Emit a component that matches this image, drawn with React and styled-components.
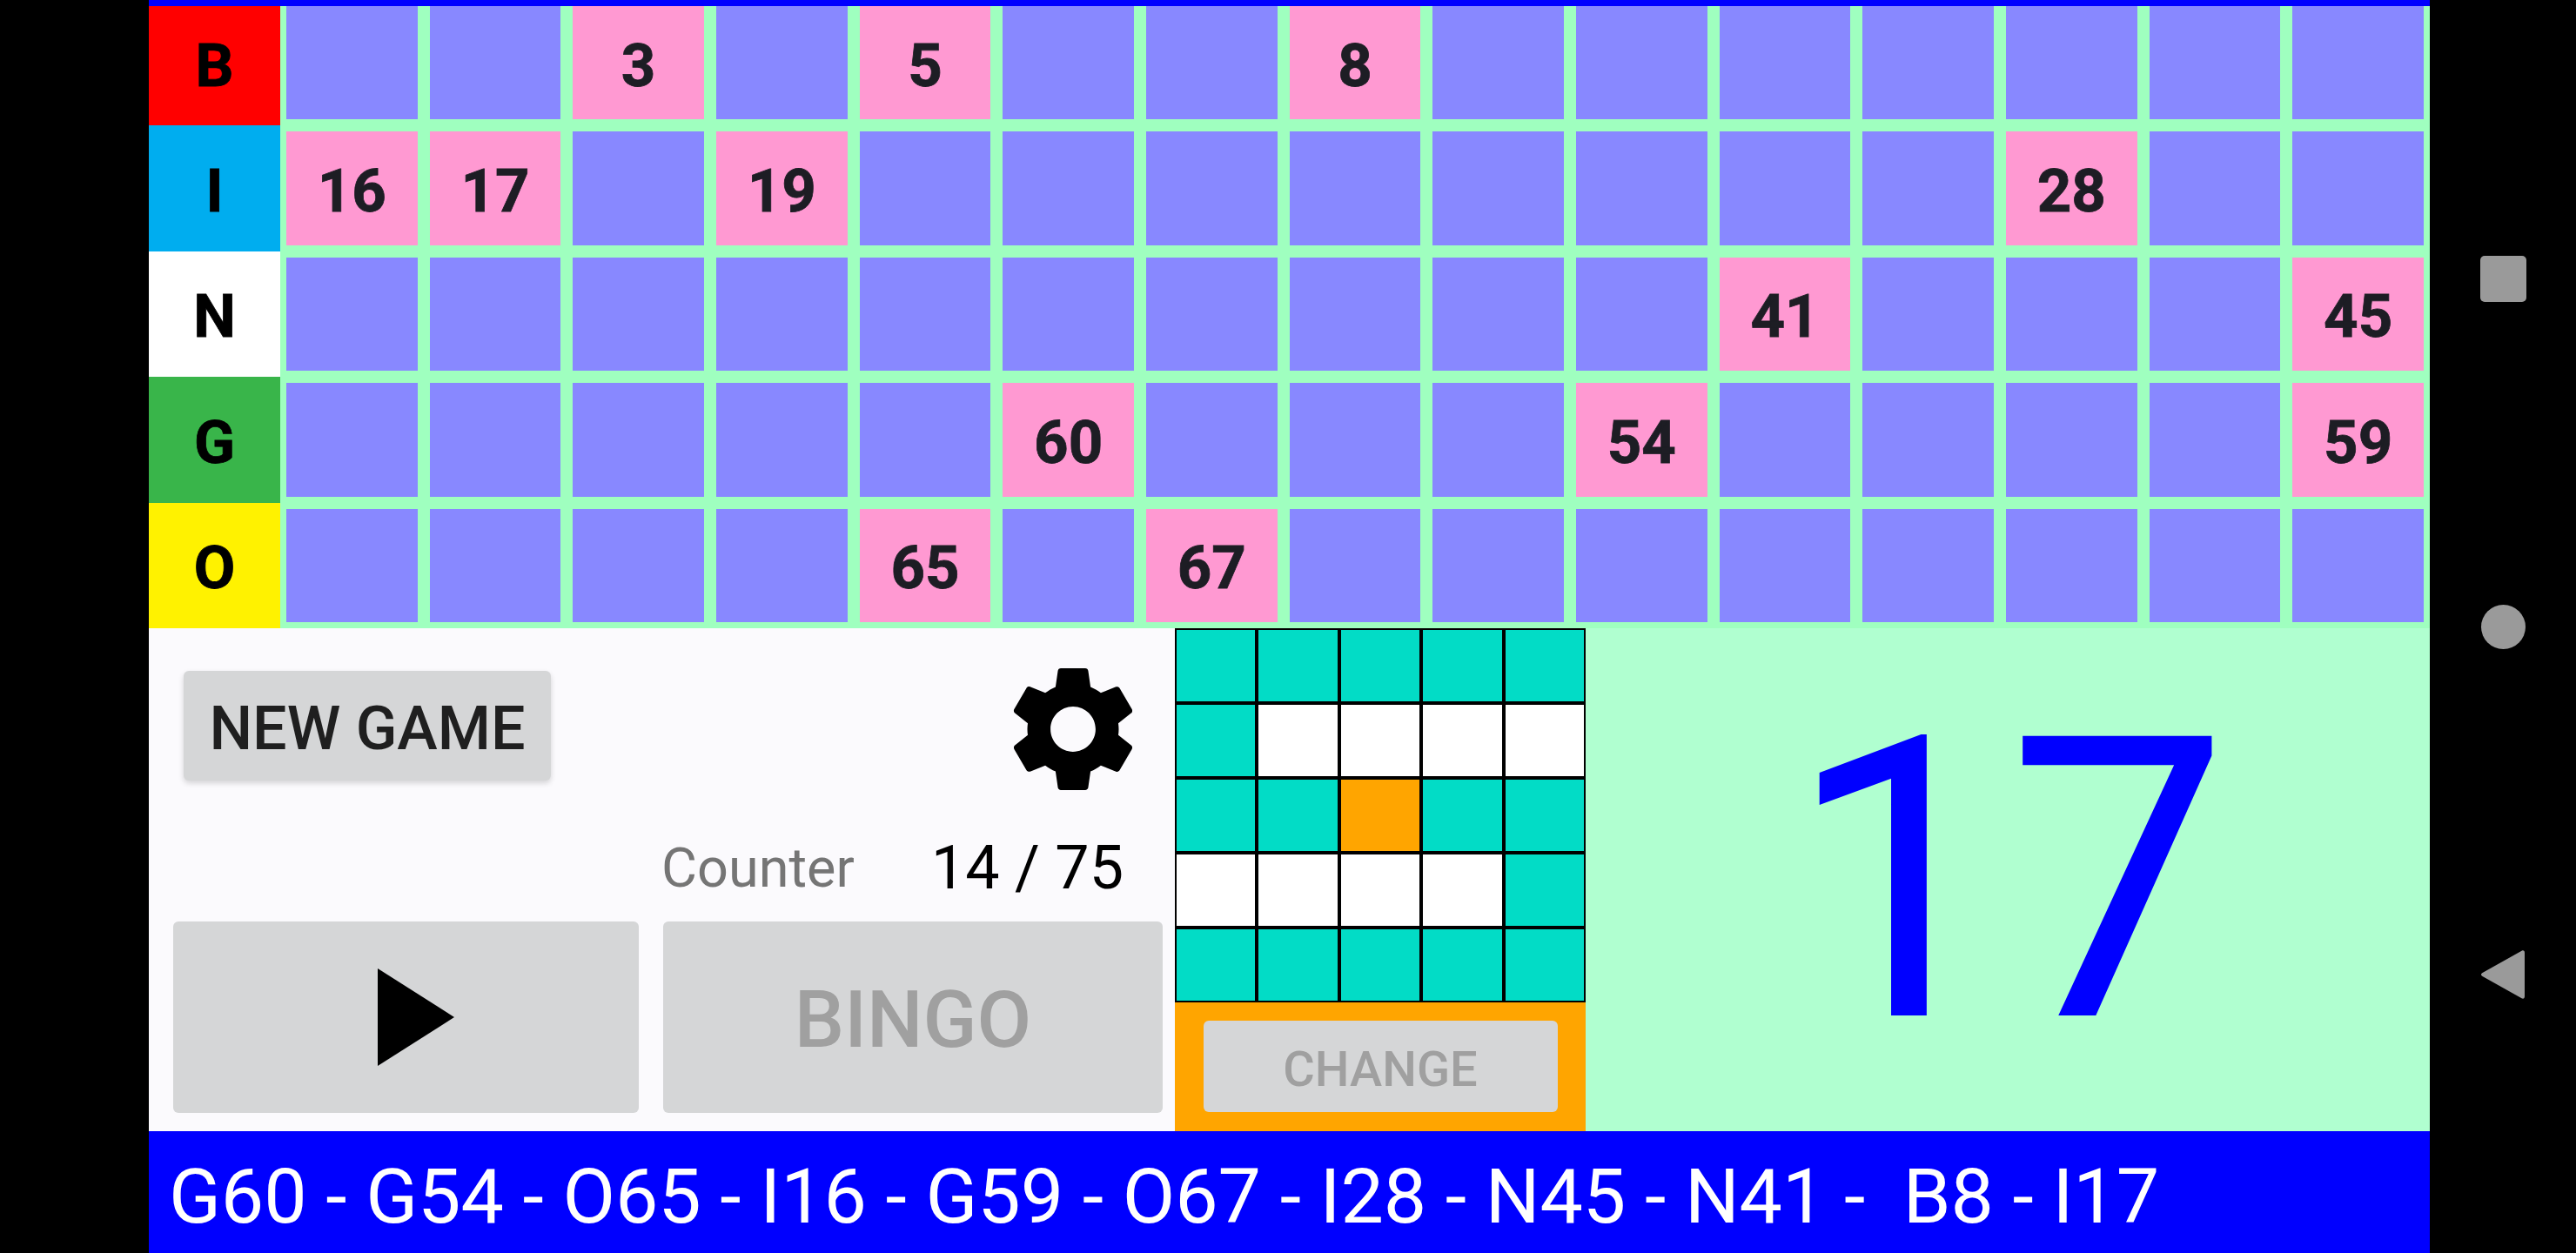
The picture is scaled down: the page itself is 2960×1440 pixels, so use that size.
import React from 'react';
import styled, { createGlobalStyle } from 'styled-components';

const GlobalStyle = createGlobalStyle`
  html, body { margin: 0; padding: 0; background: #000; }
  body { font-family: Roboto, "Liberation Sans", sans-serif; }
`;

const ROWS = [
  { letter: 'B', color: '#ff0000', called: { 3: 3, 5: 5, 8: 8 } },
  { letter: 'I', color: '#00adef', called: { 1: 16, 2: 17, 4: 19, 13: 28 } },
  { letter: 'N', color: '#ffffff', called: { 11: 41, 15: 45 } },
  { letter: 'G', color: '#39b54a', called: { 6: 60, 10: 54, 15: 59 } },
  { letter: 'O', color: '#fff200', called: { 5: 65, 7: 67 } }
];

const PATTERN = ['00000', '01111', '00200', '11110', '00000'];

const COLS = Array.from({ length: 15 }, (_, i) => i + 1);

const Screen = styled.div`
  display: flex;
  width: 2960px;
  height: 1440px;
  padding-left: 171px;
  box-sizing: border-box;
  background: #000;
  overflow: hidden;
`;

const Game = styled.div`
  display: flex;
  flex-direction: column;
  width: 2621px;
  height: 1440px;
`;

const TopBar = styled.div`
  height: 7px;
  background: #0000ff;
`;

const Board = styled.div`
  display: grid;
  grid-template-columns: 151px repeat(15, 1fr);
  grid-template-rows: 137.4px repeat(4, 144.4px);
  background: #9fffbf;
`;

const RowLabel = styled.div`
  display: flex;
  align-items: center;
  justify-content: center;
  box-sizing: border-box;
  padding: ${p => (p.$first ? '0 0 1px' : '6px 0 0')};
  background: ${p => p.$color};
  color: #000;
  font: 700 69px Roboto, sans-serif;
  -webkit-text-stroke: 0.8px #000;
`;

const Tile = styled.div`
  display: flex;
  align-items: center;
  justify-content: center;
  margin: ${p => (p.$first ? '0 7px 7px' : '7px')};
  padding-top: 6px;
  background: ${p => (p.$called ? '#ff99d2' : '#8888ff')};
  color: #1d1d24;
  font: 700 69px Roboto, sans-serif;
  -webkit-text-stroke: 0.8px #1d1d24;
`;

const Controls = styled.div`
  display: flex;
  height: 578px;
`;

const LeftPanel = styled.div`
  display: flex;
  flex-direction: column;
  width: 1179px;
  background: #fbfafd;
`;

const TopRow = styled.div`
  display: flex;
  align-items: center;
  justify-content: space-between;
  height: 126px;
  margin-top: 49px;
  padding: 0 33px 0 40px;
`;

const Button = styled.div`
  display: flex;
  align-items: center;
  justify-content: center;
  box-sizing: border-box;
  border-radius: 6px;
  background: #d5d6d7;
  font-family: Roboto, sans-serif;
  font-weight: 500;
`;

const NewGame = styled(Button)`
  width: 422px;
  height: 126px;
  padding-top: 6px;
  color: #1f1f1f;
  font-size: 70px;
  box-shadow: 0 3px 6px rgba(0, 0, 0, 0.16);
`;

const Gear = styled.svg`
  display: block;
  width: 168px;
  height: 168px;
  margin-top: 9px;
  fill: #000;
`;

const CounterRow = styled.div`
  display: flex;
  align-items: center;
  height: 60px;
  margin-top: 70px;
  padding-left: 589px;
`;

const CounterLabel = styled.span`
  width: 310px;
  padding-top: 2px;
  color: #757575;
  font-size: 63px;
`;

const CounterValue = styled.span`
  color: #000;
  font-size: 70px;
`;

const ButtonRow = styled.div`
  display: flex;
  gap: 28px;
  margin-top: auto;
  margin-bottom: 21px;
  padding-left: 28px;
`;

const PlayButton = styled(Button)`
  width: 535px;
  height: 220px;
`;

const PlayIcon = styled.svg`
  display: block;
  width: 88px;
  height: 112px;
  margin-left: 23px;
  fill: #000;
`;

const BingoButton = styled(Button)`
  width: 574px;
  height: 220px;
  padding-top: 7px;
  color: #a0a0a0;
  font-size: 91px;
`;

const PatternColumn = styled.div`
  display: flex;
  flex-direction: column;
  width: 472px;
  background: #ffa500;
`;

const PatternGrid = styled.div`
  display: grid;
  grid-template-columns: repeat(5, 1fr);
  grid-template-rows: repeat(5, 1fr);
  height: 430px;
`;

const PatternCell = styled.div`
  box-sizing: border-box;
  border: 2px solid #000;
  background: ${p => ({ 0: '#02dcc6', 1: '#ffffff', 2: '#ffa500' })[p.$kind]};
`;

const ChangeWrap = styled.div`
  display: flex;
  flex: 1;
  align-items: center;
  justify-content: center;
`;

const ChangeButton = styled(Button)`
  width: 407px;
  height: 105px;
  padding-top: 6px;
  color: #a0a0a0;
  font-size: 56px;
`;

const NumberPanel = styled.div`
  display: flex;
  flex: 1;
  align-items: center;
  justify-content: center;
  padding-top: 4px;
  background: #b0ffd0;
  color: #0000ff;
  font-size: 452px;
  line-height: 1;
`;

const CallLog = styled.div`
  display: flex;
  flex: 1;
  align-items: center;
  padding: 9px 0 0 23px;
  background: #0000ff;
  color: #fff;
  font-size: 88px;
  letter-spacing: -0.1px;
  white-space: pre;
`;

const NavBar = styled.div`
  display: grid;
  grid-template-rows: repeat(3, 400px);
  justify-items: center;
  align-items: center;
  width: 168px;
  padding-top: 120px;
`;

const NavSquare = styled.div`
  width: 53px;
  height: 53px;
  border-radius: 5px;
  background: #9a9a9a;
`;

const NavCircle = styled.div`
  width: 51px;
  height: 51px;
  border-radius: 50%;
  background: #9a9a9a;
`;

const NavBack = styled.svg`
  display: block;
  width: 50px;
  height: 56px;
  fill: #9a9a9a;
`;

const App = () => (
  <Screen>
    <GlobalStyle />
    <Game>
      <TopBar />
      <Board>
        {ROWS.map((row, r) => (
          <React.Fragment key={row.letter}>
            <RowLabel $first={r === 0} $color={row.color}>{row.letter}</RowLabel>
            {COLS.map(col => (
              <Tile key={col} $first={r === 0} $called={!!row.called[col]}>
                {row.called[col]}
              </Tile>
            ))}
          </React.Fragment>
        ))}
      </Board>
      <Controls>
        <LeftPanel>
          <TopRow>
            <NewGame>NEW GAME</NewGame>
            <Gear viewBox="0 0 24 24">
              <path d="M19.43 12.98c.04-.32.07-.64.07-.98s-.03-.66-.07-.98l2.11-1.65c.19-.15.24-.42.12-.64l-2-3.46c-.12-.22-.39-.3-.61-.22l-2.49 1c-.52-.4-1.08-.73-1.69-.98l-.38-2.65C14.46 2.18 14.25 2 14 2h-4c-.25 0-.46.18-.49.42l-.38 2.65c-.61.25-1.17.59-1.69.98l-2.49-1c-.23-.09-.49 0-.61.22l-2 3.46c-.13.22-.07.49.12.64l2.11 1.65c-.04.32-.07.65-.07.98s.03.66.07.98l-2.11 1.65c-.19.15-.24.42-.12.64l2 3.46c.12.22.39.3.61.22l2.49-1c.52.4 1.08.73 1.69.98l.38 2.65c.03.24.24.42.49.42h4c.25 0 .46-.18.49-.42l.38-2.65c.61-.25 1.17-.59 1.69-.98l2.49 1c.23.09.49 0 .61-.22l2-3.46c.12-.22.07-.49-.12-.64l-2.11-1.65zM12 15.7c-2.04 0-3.7-1.66-3.7-3.7s1.66-3.7 3.7-3.7 3.7 1.66 3.7 3.7-1.66 3.7-3.7 3.7z" />
            </Gear>
          </TopRow>
          <CounterRow>
            <CounterLabel>Counter</CounterLabel>
            <CounterValue>14 / 75</CounterValue>
          </CounterRow>
          <ButtonRow>
            <PlayButton>
              <PlayIcon viewBox="0 0 88 112">
                <polygon points="0,0 88,56 0,112" />
              </PlayIcon>
            </PlayButton>
            <BingoButton>BINGO</BingoButton>
          </ButtonRow>
        </LeftPanel>
        <PatternColumn>
          <PatternGrid>
            {PATTERN.join('').split('').map((kind, i) => (
              <PatternCell key={i} $kind={kind} />
            ))}
          </PatternGrid>
          <ChangeWrap>
            <ChangeButton>CHANGE</ChangeButton>
          </ChangeWrap>
        </PatternColumn>
        <NumberPanel>17</NumberPanel>
      </Controls>
      <CallLog>G60 - G54 - O65 - I16 - G59 - O67 - I28 - N45 - N41 -  B8 - I17</CallLog>
    </Game>
    <NavBar>
      <NavSquare />
      <NavCircle />
      <NavBack viewBox="0 0 50 56">
        <path d="M47 .5 C49 0 50 1 50 3 V53 C50 55 49 56 47 55.5 L1.5 30 C-.5 29 -.5 27 1.5 26 Z" />
      </NavBack>
    </NavBar>
  </Screen>
);

export default App;
